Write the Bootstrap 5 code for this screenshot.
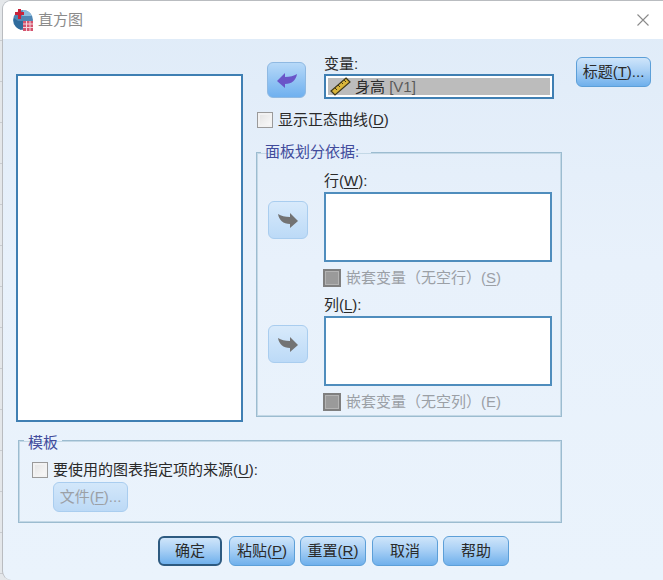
<!DOCTYPE html>
<html lang="zh">
<head>
<meta charset="utf-8">
<title>直方图</title>
<link rel="stylesheet" href="https://cdn.jsdelivr.net/npm/bootstrap@5.3.0/dist/css/bootstrap.min.css">
<style>
html,body{height:100%;margin:0}
body{width:663px;height:580px;overflow:hidden;background:#e4e7ea repeating-linear-gradient(180deg,transparent 0 40px,#c9ccd0 40px 41px);font-family:"Liberation Sans","Noto Sans CJK SC",sans-serif;font-size:15px;color:#2a2a2a;line-height:20px}
.dlg-win{margin-left:2px;width:661px;height:580px;border-radius:9px 0 0 9px;border-left:1px solid #b9bcc0;border-top:1px solid #b9bcc0;overflow:hidden;background:linear-gradient(180deg,#dfebf8 0,#e8f1fb 45%,#eaf3fc 100%)}
.dlg-title{height:38px;background:#fff;padding-left:9px;color:#8b8b8b}
.dlg-title span{margin-left:4px}
.dlg-close{margin-left:auto;margin-right:13px}
.dlg-body{padding:0 0 0 13px}
.src-list{width:227px;height:348px;margin-top:35px;background:#fff;border:2px solid #3f7fb3;flex:none}
.mid-col{width:306px;margin-left:13px;flex:none}
.top-row{padding-top:17px;height:71px}
.go-btn{width:39px;height:36px;margin:6px 0 0 11px;border:1px solid #8fb9e2;border-radius:6px;background:linear-gradient(180deg,#b7d9f8,#6fb0ef);flex:none}
.go-off{width:40px;background:linear-gradient(180deg,#d8eafb,#bcdaf7);border-color:#a9cdef;margin:0 0 0 11px;height:38px}
.var-col{margin-left:18px}
.field-lbl{height:18px;line-height:16px;display:block}
.var-box{width:230px;height:25px;border:2px solid #3f7fb3;background:#fff;padding:2px}
.var-inner{background:#bcbcbc;height:100%;padding-left:2px;gap:4px;width:100%}
.var-inner b{font-weight:400;color:#5a5a5a}
.tick{width:16px;height:16px;flex:none;border:1px solid #9a9a9a;background:linear-gradient(135deg,#e2e2e2,#fbfbfb);box-shadow:inset 0 0 0 2px #f2f2f2}
.tick-off{width:18px;height:18px;border:2px solid #7f7f7f;background:#9a9a9a;box-shadow:inset 0 0 0 1px #b3b3b3}
.show-row{margin-left:1px;gap:5px;height:20px}
.grp{border:1px solid #9cbcd0;box-shadow:inset 0 0 0 1px #c3d8e6;margin:0;padding:0;min-width:0}
.grp legend{float:none;width:auto;font-size:15px;line-height:18px;margin:0;color:#414b9c}
.panel-grp{margin-top:13px;height:274px;padding-top:12px}
.panel-grp legend{margin-left:4px;padding:0 12px 0 4px}
.cell-row{height:124px}
.cell-col{margin-left:16px;width:228px}
.drop-box{width:228px;height:70px;background:#fff;border:2px solid #4f8dbd;margin-top:1px}
.nest-row{margin-top:7px;height:18px;gap:5px;color:#9ba0a6;margin-left:-1px}
.arrow-wrap{padding-top:28px}
.tpl-grp{margin:6px 0 0 2px;width:544px;height:95px;padding:6px 0 0 13px}
.tpl-grp legend{margin-left:-8px;padding:6px 4px 0}
.tpl-row{gap:5px;height:20px;margin-top:2px}
.file-btn{margin:2px 0 0 21px;width:75px;height:30px;font-size:15px;line-height:26px;padding:0;border:1px solid #a9cdef;border-radius:6px;background:linear-gradient(180deg,#d3e7fa,#bcd9f6);color:#9ba0a6}
.side-col{padding-top:18px;margin-left:14px}
.sys-btn{height:30px;font-size:15px;line-height:26px;padding:0;color:#2a2a2a;border:1px solid #5c9fd8;border-radius:6px;background:linear-gradient(180deg,#cfe5fa 0,#a9d0f5 45%,#6fb0ec 100%)}
.title-btn{width:75px}
.foot-row{margin-top:13px;padding-left:142px;gap:5px}
.foot-row .sys-btn{width:66px}
.foot-row .ok-btn{width:64px;margin-right:2px;border:2px solid #2d5a80}
.foot-row .cancel-btn{margin-left:1px}
u{text-underline-offset:2px}
</style>
</head>
<body>
<div class="dlg-win">
  <div class="dlg-title d-flex align-items-center">
    <svg width="22" height="22" viewBox="0 0 22 22" aria-hidden="true">
      <circle cx="11" cy="11" r="10" fill="#4f86b4"/>
      <path d="M11 1a10 10 0 0 1 9 6H10z" fill="#8fbbdc"/>
      <path d="M2 9a10 10 0 0 0 7 12l3-3V12H6z" fill="#2f6b9c"/>
      <rect x="3" y="3" width="9" height="3" fill="#c8233a"/><rect x="6" y="0" width="3" height="10" fill="#c8233a"/>
      <rect x="11" y="12" width="10" height="10" fill="#d5546e"/>
      <path d="M11 15h10M11 18.500h10M14.500 12v10M18 12v10" stroke="#f3d5dc" stroke-width="1"/>
    </svg>
    <span>直方图</span>
    <svg class="dlg-close" width="14" height="14" viewBox="0 0 14 14" aria-hidden="true"><path d="M1.500 1.500l11 11M12.500 1.500l-11 11" stroke="#8a8a8a" stroke-width="1.100" fill="none"/></svg>
  </div>
  <div class="dlg-body">
    <div class="d-flex">
      <div class="src-list"></div>
      <div class="mid-col">
        <div class="top-row d-flex">
          <div class="go-btn d-flex align-items-center justify-content-center">
            <svg width="20" height="16" viewBox="0 0 20 16" aria-hidden="true"><path d="M0 9l8-8v4c5 0 9-1 12-3-1 6-5 10-12 10v4z" fill="#6a55c8"/></svg>
          </div>
          <div class="var-col">
            <label class="field-lbl">变量:</label>
            <div class="var-box"><div class="var-inner d-flex align-items-center">
              <svg width="21" height="19" viewBox="0 0 21 19" aria-hidden="true"><path d="M16 1l4 4L5 18l-4-4z" fill="#d9b53a" stroke="#3f3719" stroke-width="1.200"/><path d="M5 11l2 2M8 8l2 2M11 5l2 2M14 3l2 2" stroke="#3f3719" stroke-width="1"/></svg>
              <span>身高 <b>[V1]</b></span>
            </div></div>
          </div>
        </div>
        <div class="show-row d-flex align-items-center">
          <span class="tick"></span><span>显示正态曲线(<u>D</u>)</span>
        </div>
        <fieldset class="grp panel-grp">
          <legend>面板划分依据:</legend>
          <div class="cell-row d-flex">
            <div class="arrow-wrap"><div class="go-btn go-off d-flex align-items-center justify-content-center">
              <svg width="20" height="16" viewBox="0 0 20 16" aria-hidden="true"><path d="M20 9l-8-8v4C7 5 3 4 0 2c1 6 5 10 12 10v4z" fill="#737373"/></svg>
            </div></div>
            <div class="cell-col">
              <label class="field-lbl">行(<u>W</u>):</label>
              <div class="drop-box"></div>
              <div class="nest-row d-flex align-items-center"><span class="tick tick-off"></span><span>嵌套变量（无空行）(<u>S</u>)</span></div>
            </div>
          </div>
          <div class="cell-row d-flex">
            <div class="arrow-wrap"><div class="go-btn go-off d-flex align-items-center justify-content-center">
              <svg width="20" height="16" viewBox="0 0 20 16" aria-hidden="true"><path d="M20 9l-8-8v4C7 5 3 4 0 2c1 6 5 10 12 10v4z" fill="#737373"/></svg>
            </div></div>
            <div class="cell-col">
              <label class="field-lbl">列(<u>L</u>):</label>
              <div class="drop-box"></div>
              <div class="nest-row d-flex align-items-center"><span class="tick tick-off"></span><span>嵌套变量（无空列）(E)</span></div>
            </div>
          </div>
        </fieldset>
      </div>
      <div class="side-col"><button type="button" class="sys-btn title-btn">标题(<u>T</u>)...</button></div>
    </div>
    <fieldset class="grp tpl-grp">
      <legend>模板</legend>
      <div class="tpl-row d-flex align-items-center"><span class="tick"></span><span>要使用的图表指定项的来源(<u>U</u>):</span></div>
      <button type="button" class="file-btn" disabled>文件(<u>F</u>)...</button>
    </fieldset>
    <div class="foot-row d-flex">
      <button type="button" class="sys-btn ok-btn">确定</button>
      <button type="button" class="sys-btn">粘贴(<u>P</u>)</button>
      <button type="button" class="sys-btn">重置(<u>R</u>)</button>
      <button type="button" class="sys-btn cancel-btn">取消</button>
      <button type="button" class="sys-btn">帮助</button>
    </div>
  </div>
</div>
<script src="https://cdn.jsdelivr.net/npm/bootstrap@5.3.0/dist/js/bootstrap.bundle.min.js"></script>
</body>
</html>
